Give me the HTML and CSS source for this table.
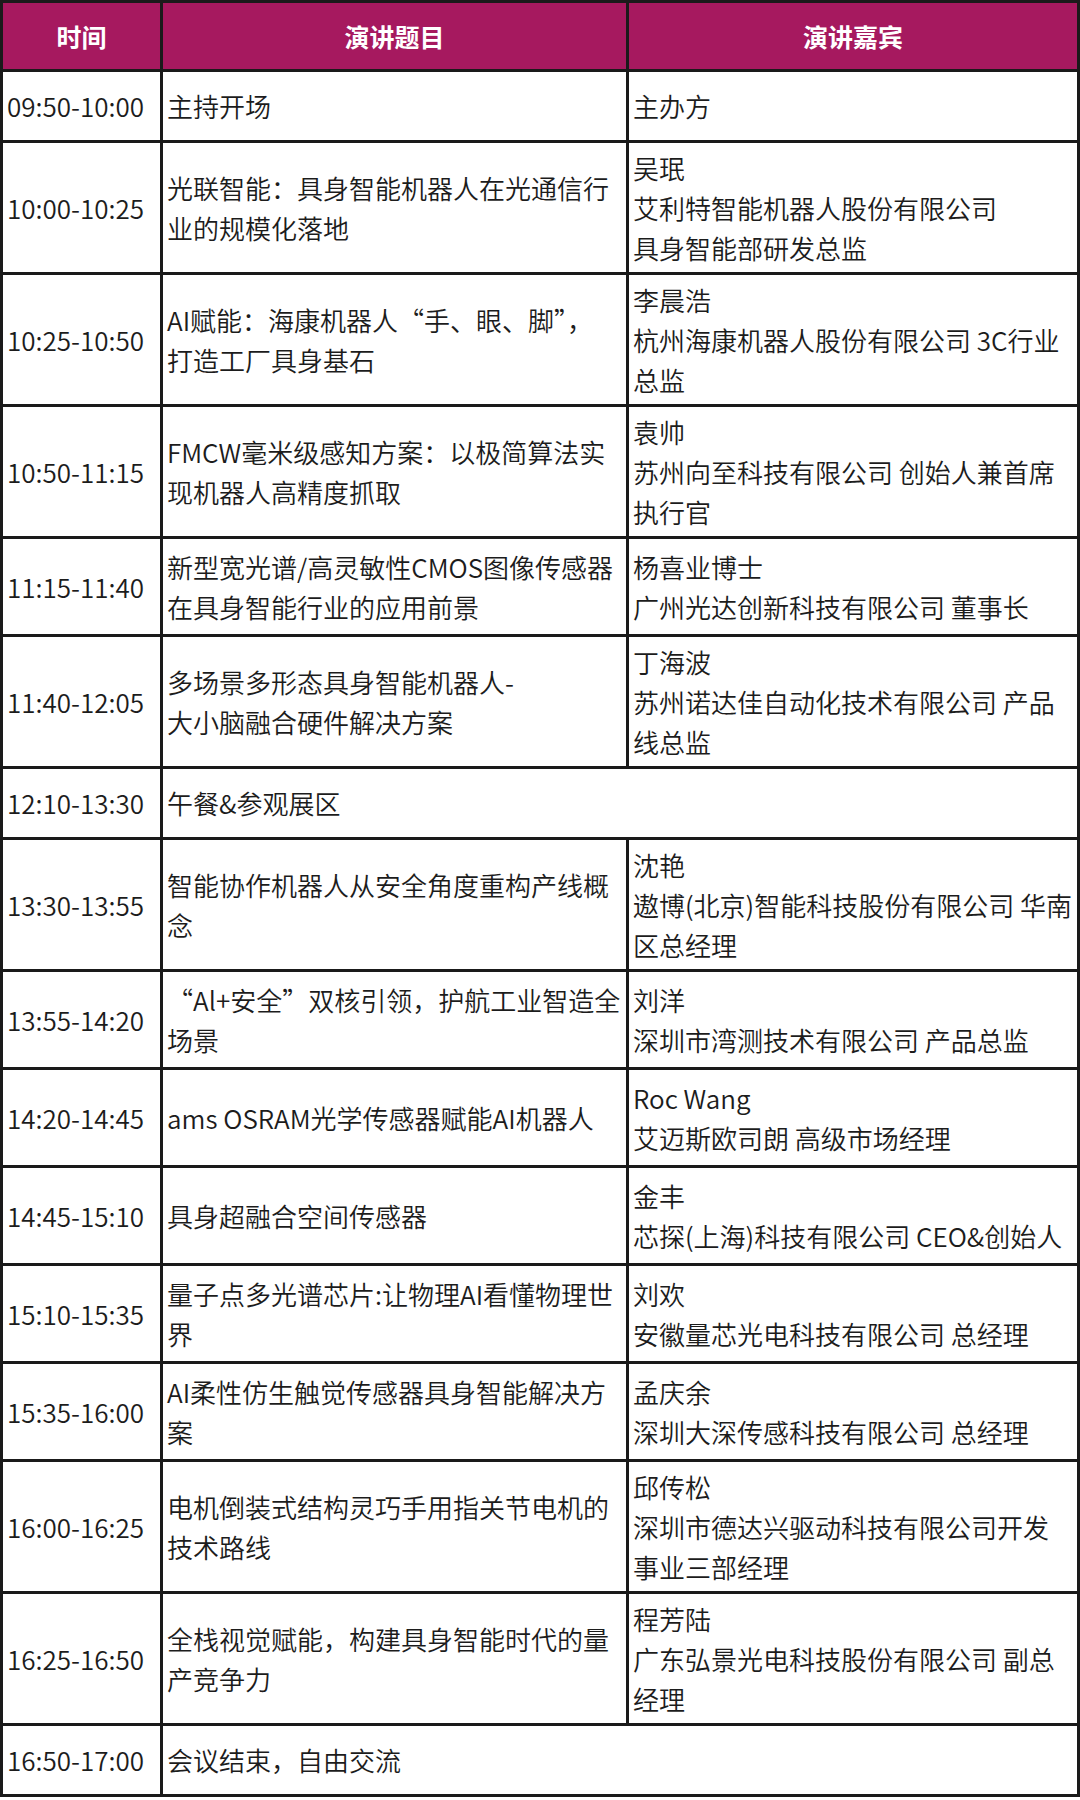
FILE: index.html
```html
<!DOCTYPE html>
<html lang="zh-CN">
<head>
<meta charset="utf-8">
<title>议程</title>
<link rel="stylesheet" href="styles.css">
</head>
<body>
<table class="agenda">
  <colgroup>
    <col class="c-time">
    <col class="c-topic">
    <col class="c-guest">
  </colgroup>
  <thead>
    <tr class="head">
      <th>时间</th>
      <th>演讲题目</th>
      <th>演讲嘉宾</th>
    </tr>
  </thead>
  <tbody>
    <tr class="l1">
      <td class="time">09:50-10:00</td>
      <td>主持开场</td>
      <td>主办方</td>
    </tr>
    <tr class="l3">
      <td class="time">10:00-10:25</td>
      <td>光联智能：具身智能机器人在光通信行<br>业的规模化落地</td>
      <td>吴珉<br>艾利特智能机器人股份有限公司<br>具身智能部研发总监</td>
    </tr>
    <tr class="l3">
      <td class="time">10:25-10:50</td>
      <td>AI赋能：海康机器人“手、眼、脚”，<br>打造工厂具身基石</td>
      <td>李晨浩<br>杭州海康机器人股份有限公司 3C行业<br>总监</td>
    </tr>
    <tr class="l3">
      <td class="time">10:50-11:15</td>
      <td>FMCW毫米级感知方案：以极简算法实<br>现机器人高精度抓取</td>
      <td>袁帅<br>苏州向至科技有限公司 创始人兼首席<br>执行官</td>
    </tr>
    <tr class="l2">
      <td class="time">11:15-11:40</td>
      <td>新型宽光谱/高灵敏性CMOS图像传感器<br>在具身智能行业的应用前景</td>
      <td>杨喜业博士<br>广州光达创新科技有限公司 董事长</td>
    </tr>
    <tr class="l3">
      <td class="time">11:40-12:05</td>
      <td>多场景多形态具身智能机器人-<br>大小脑融合硬件解决方案</td>
      <td>丁海波<br>苏州诺达佳自动化技术有限公司 产品<br>线总监</td>
    </tr>
    <tr class="l1">
      <td class="time">12:10-13:30</td>
      <td colspan="2">午餐&amp;参观展区</td>
    </tr>
    <tr class="l3">
      <td class="time">13:30-13:55</td>
      <td>智能协作机器人从安全角度重构产线概<br>念</td>
      <td>沈艳<br>遨博(北京)智能科技股份有限公司 华南<br>区总经理</td>
    </tr>
    <tr class="l2">
      <td class="time">13:55-14:20</td>
      <td>“Al+安全”双核引领，护航工业智造全<br>场景</td>
      <td>刘洋<br>深圳市湾测技术有限公司 产品总监</td>
    </tr>
    <tr class="l2">
      <td class="time">14:20-14:45</td>
      <td>ams OSRAM光学传感器赋能AI机器人</td>
      <td>Roc Wang<br>艾迈斯欧司朗 高级市场经理</td>
    </tr>
    <tr class="l2">
      <td class="time">14:45-15:10</td>
      <td>具身超融合空间传感器</td>
      <td>金丰<br>芯探(上海)科技有限公司 CEO&amp;创始人</td>
    </tr>
    <tr class="l2">
      <td class="time">15:10-15:35</td>
      <td>量子点多光谱芯片:让物理AI看懂物理世<br>界</td>
      <td>刘欢<br>安徽量芯光电科技有限公司 总经理</td>
    </tr>
    <tr class="l2">
      <td class="time">15:35-16:00</td>
      <td>AI柔性仿生触觉传感器具身智能解决方<br>案</td>
      <td>孟庆余<br>深圳大深传感科技有限公司 总经理</td>
    </tr>
    <tr class="l3">
      <td class="time">16:00-16:25</td>
      <td>电机倒装式结构灵巧手用指关节电机的<br>技术路线</td>
      <td>邱传松<br>深圳市德达兴驱动科技有限公司开发<br>事业三部经理</td>
    </tr>
    <tr class="l3">
      <td class="time">16:25-16:50</td>
      <td>全栈视觉赋能，构建具身智能时代的量<br>产竞争力</td>
      <td>程芳陆<br>广东弘景光电科技股份有限公司 副总<br>经理</td>
    </tr>
    <tr class="l1">
      <td class="time">16:50-17:00</td>
      <td colspan="2">会议结束，自由交流</td>
    </tr>
  </tbody>
</table>
</body>
</html>
```

FILE: styles.css
```css
html, body {
  margin: 0;
  padding: 0;
  background: #ffffff;
}

body {
  font-family: "Noto Sans CJK SC", "Noto Sans", sans-serif;
  color: #1c1c1c;
}

.agenda {
  width: 1080px;
  table-layout: fixed;
  border-collapse: collapse;
  border: 3px solid #1a1a1a;
  border-top-color: #2e2e2e;
}

.c-time { width: 160px; }
.c-topic { width: 466px; }
.c-guest { width: auto; }

.agenda th,
.agenda td {
  border: 3px solid #1a1a1a;
  padding: 0 4px;
  vertical-align: middle;
  white-space: nowrap;
  overflow: hidden;
}

.agenda th {
  background: #a6195f;
  color: #ffffff;
  font-size: 25px;
  font-weight: 700;
  line-height: 36px;
  text-align: center;
}

.agenda td {
  font-size: 26px;
  font-weight: 350;
  line-height: 40px;
  text-align: left;
}

.agenda td.time {
  padding-left: 4px;
  padding-right: 0;
}

.head { height: 69px; }
.l1 { height: 71px; }
.l2 { height: 98px; }
.l3 { height: 132px; }
```
